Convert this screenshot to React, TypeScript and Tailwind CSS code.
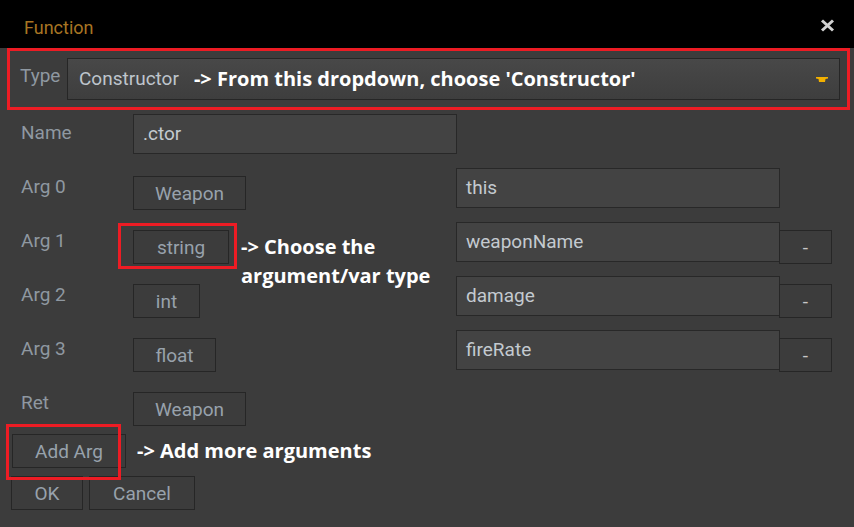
import type { ReactNode } from 'react';

interface ArgRow {
  label: string;
  type: string;
  width: string;
  name?: string;
  removable?: boolean;
}

const rows: ArgRow[] = [
  { label: 'Arg 0', type: 'Weapon', width: 'w-[113px]', name: 'this' },
  { label: 'Arg 1', type: 'string', width: 'w-[96px]', name: 'weaponName', removable: true },
  { label: 'Arg 2', type: 'int', width: 'w-[67px]', name: 'damage', removable: true },
  { label: 'Arg 3', type: 'float', width: 'w-[83px]', name: 'fireRate', removable: true },
  { label: 'Ret', type: 'Weapon', width: 'w-[113px]' },
];

function FlatButton({ children, className = '' }: { children: ReactNode; className?: string }) {
  return (
    <button className={`h-[34px] border border-[#262626] bg-[#3c3c3c] text-[19px] leading-none text-[#98a2ac] ${className}`}>
      {children}
    </button>
  );
}

function TextField({ value, className = '' }: { value: string; className?: string }) {
  return (
    <div className={`flex h-[40px] items-center border border-[#282828] bg-[#434343] pl-[9px] text-[19px] text-[#c4cad0] ${className}`}>
      {value}
    </div>
  );
}

const note = "font-['Open_Sans',sans-serif] font-bold text-white text-[20px]";

export default function App() {
  return (
    <div className="h-[527px] w-[854px] overflow-hidden bg-[#3c3c3c] font-[Roboto,sans-serif]">
      <div className="flex h-[48px] items-center justify-between bg-black pl-[24px] pr-[19px]">
        <span className="mt-[7px] text-[18px] text-[#a87523]">Function</span>
        <svg width="15" height="13" viewBox="0 0 15 13" className="mt-[3px]">
          <path d="M2 1.5 L13 11.5 M13 1.5 L2 11.5" stroke="#d2d2d2" strokeWidth="3" />
        </svg>
      </div>

      <div className="ml-[7px] flex h-[62px] w-[843px] items-center border-[3px] border-[#ed1c24] pl-[10px] pr-[7px]">
        <span className="-mt-[6px] w-[47px] text-[19px] text-[#8f98a1]">Type</span>
        <div className="flex h-[42px] flex-1 items-center border border-[#262626] bg-gradient-to-b from-[#484848] to-[#3e3e3e] pl-[11px] pr-[11px]">
          <span className="text-[19px] text-[#bec5cc]">Constructor</span>
          <span className={`ml-[15px] ${note}`}>-&gt; From this dropdown, choose 'Constructor'</span>
          <svg width="12" height="5" viewBox="0 0 12 5" className="ml-auto">
            <polygon points="0,0 12,0 12,1.5 9.5,2 9,5 3,5 2.5,2 0,1.5" fill="#f2b000" />
          </svg>
        </div>
      </div>

      <div className="mt-[4px] flex flex-col gap-[14px] pl-[21px]">
        <div className="flex h-[40px] items-start">
          <span className="w-[112px] pt-[9px] text-[19px] leading-[20px] text-[#8f98a1]">Name</span>
          <TextField value=".ctor" className="w-[324px]" />
        </div>

        {rows.map((row) => (
          <div key={row.label} className="flex h-[40px] items-start">
            <div className="flex w-[435px] items-start">
              <span className="w-[112px] pt-[9px] text-[19px] leading-[20px] text-[#8f98a1]">{row.label}</span>
              <div className="relative mt-[8px]">
                <FlatButton className={row.width}>{row.type}</FlatButton>
                {row.type === 'string' && (
                  <div className="absolute left-[-15px] top-[-7px] h-[46px] w-[119px] border-[3px] border-[#ed1c24]" />
                )}
              </div>
              {row.type === 'string' && (
                <div className={`ml-[12px] mt-[10px] leading-[29px] ${note}`}>
                  <div>-&gt; Choose the</div>
                  <div>argument/var type</div>
                </div>
              )}
            </div>
            {row.name && (
              <>
                <TextField value={row.name} className="w-[324px]" />
                {row.removable && (
                  <FlatButton className="-ml-[1px] mt-[8px] w-[53px] text-[15px] text-[#c8c8c8]">-</FlatButton>
                )}
              </>
            )}
          </div>
        ))}
      </div>

      <div className="mt-[10px] flex items-center pl-[12px]">
        <div className="relative">
          <FlatButton className="w-[114px]">Add Arg</FlatButton>
          <div className="absolute left-[-6px] top-[-10px] h-[56px] w-[115px] border-[3px] border-[#ed1c24]" />
        </div>
        <span className={`ml-[11px] ${note}`}>-&gt; Add more arguments</span>
      </div>

      <div className="mt-[8px] flex gap-[6px] pl-[11px]">
        <FlatButton className="w-[72px]">OK</FlatButton>
        <FlatButton className="w-[106px]">Cancel</FlatButton>
      </div>
    </div>
  );
}
